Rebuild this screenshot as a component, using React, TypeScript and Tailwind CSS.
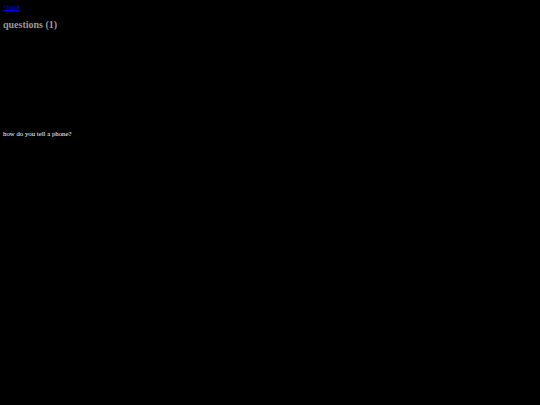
export default function App() {
  return (
    <div className="min-h-screen bg-black px-[3px] pt-[3px] font-['Liberation_Serif',serif]">
      <a href="#" className="block text-[7px] leading-[9px] text-[#0000ee] underline">
        &lt;back
      </a>
      <h1 className="mt-[7px] text-[10px] font-bold leading-[12px] text-[#9a9a9a]">questions (1)</h1>
      <div className="mt-[98px] text-[6.8px] leading-[9px] text-white">how do you tell a phone?</div>
    </div>
  )
}
